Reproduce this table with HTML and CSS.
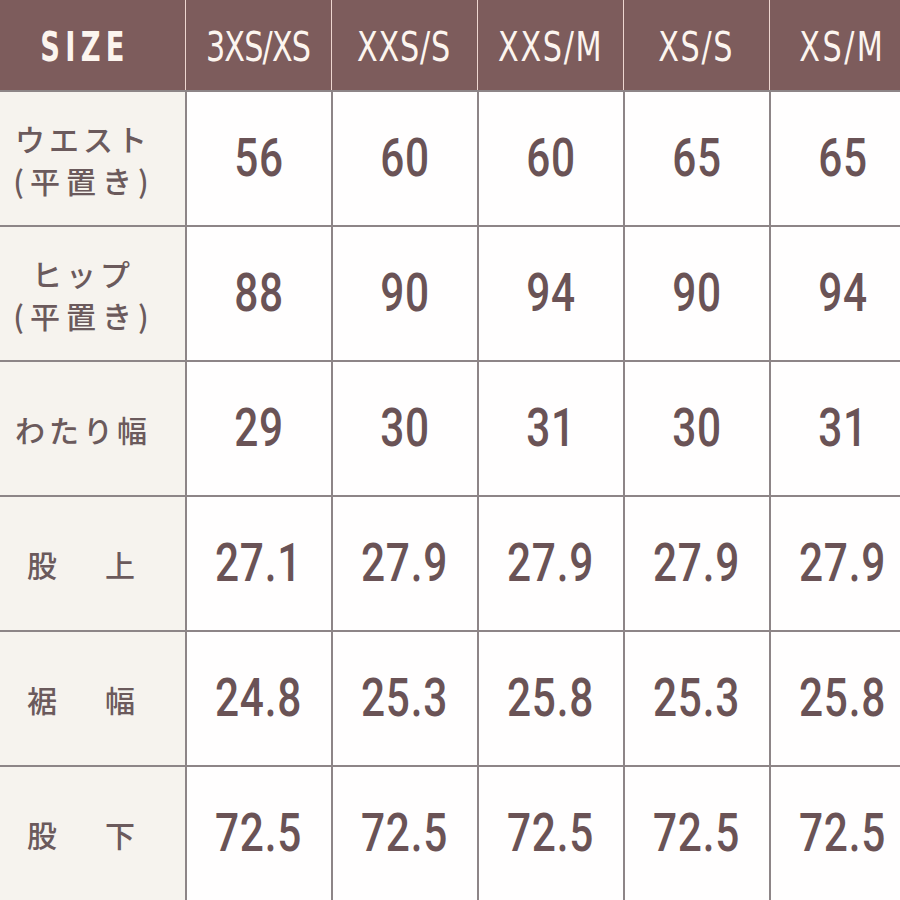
FILE: index.html
```html
<!DOCTYPE html>
<html lang="ja">
<head>
<meta charset="utf-8">
<title>Size chart</title>
<link rel="stylesheet" href="styles.css">
</head>
<body>
<div class="chart">
  <div class="hd hd-first"><span class="sq size-label">SIZE</span></div>
  <div class="hd"><span class="sq h1">3XS/XS</span></div>
  <div class="hd"><span class="sq h2">XXS/S</span></div>
  <div class="hd"><span class="sq h3">XXS/M</span></div>
  <div class="hd"><span class="sq h4">XS/S</span></div>
  <div class="hd"><span class="sq h5">XS/M</span></div>

  <div class="lbl"><div class="lbl-lines"><span>ウエスト</span><span class="paren">(平置き)</span></div></div>
  <div class="val"><span>56</span></div><div class="val"><span>60</span></div><div class="val"><span>60</span></div><div class="val"><span>65</span></div><div class="val"><span>65</span></div>

  <div class="lbl"><div class="lbl-lines"><span>ヒップ</span><span class="paren">(平置き)</span></div></div>
  <div class="val"><span>88</span></div><div class="val"><span>90</span></div><div class="val"><span>94</span></div><div class="val"><span>90</span></div><div class="val"><span>94</span></div>

  <div class="lbl"><div class="lbl-lines"><span>わたり幅</span></div></div>
  <div class="val"><span>29</span></div><div class="val"><span>30</span></div><div class="val"><span>31</span></div><div class="val"><span>30</span></div><div class="val"><span>31</span></div>

  <div class="lbl"><div class="lbl-pair"><span>股</span><span>上</span></div></div>
  <div class="val"><span>27.1</span></div><div class="val"><span>27.9</span></div><div class="val"><span>27.9</span></div><div class="val"><span>27.9</span></div><div class="val"><span>27.9</span></div>

  <div class="lbl"><div class="lbl-pair"><span>裾</span><span>幅</span></div></div>
  <div class="val"><span>24.8</span></div><div class="val"><span>25.3</span></div><div class="val"><span>25.8</span></div><div class="val"><span>25.3</span></div><div class="val"><span>25.8</span></div>

  <div class="lbl"><div class="lbl-pair"><span>股</span><span>下</span></div></div>
  <div class="val"><span>72.5</span></div><div class="val"><span>72.5</span></div><div class="val"><span>72.5</span></div><div class="val"><span>72.5</span></div><div class="val"><span>72.5</span></div>
</div>
</body>
</html>
```

FILE: styles.css
```css
html, body {
  margin: 0;
  padding: 0;
  background: #fffefe;
  overflow: hidden;
}

.chart {
  display: grid;
  grid-template-columns: 185px repeat(5, 146px);
  grid-template-rows: 90px repeat(6, 135px);
  width: 915px;
}

.hd {
  background: #7d5c5c;
  color: #fcf5ef;
  display: flex;
  align-items: center;
  justify-content: center;
  border-left: 1px solid #eed6d0;
  box-sizing: border-box;
  font-family: "DejaVu Sans Condensed", "DejaVu Sans", sans-serif;
  font-size: 40px;
  line-height: 1;
  padding-top: 4px;
}

.sq {
  display: inline-block;
  transform: scaleX(0.84);
  white-space: nowrap;
}

.hd-first {
  border-left: none;
  padding-right: 22px;
}

.size-label {
  font-weight: 700;
  letter-spacing: 7px;
  margin-right: -7px;
  transform: scaleX(0.76);
}

.h1 { letter-spacing: -1px; }
.h2 { letter-spacing: 1px; }
.h3 { letter-spacing: 2px; }
.h4 { letter-spacing: 2px; }
.h5 { letter-spacing: 3px; }

.lbl {
  background: #f6f3ee;
  border-top: 2px solid #8d8587;
  box-sizing: border-box;
  display: flex;
  align-items: center;
  justify-content: center;
  padding-right: 23px;
  color: #6b5a5c;
  font-family: "Noto Sans CJK JP", "Noto Sans", sans-serif;
  font-weight: 500;
  font-size: 30px;
}

.lbl-lines {
  display: flex;
  flex-direction: column;
  align-items: center;
  line-height: 42px;
  letter-spacing: 4px;
  margin-right: -4px;
}

.lbl-lines .paren {
  letter-spacing: 6px;
  margin-right: -2px;
}

.lbl-pair {
  display: flex;
  gap: 48px;
  line-height: 1;
}

.val {
  background: #fffefe;
  border-top: 2px solid #8d8587;
  border-left: 2px solid #8d8587;
  box-sizing: border-box;
  display: flex;
  align-items: center;
  justify-content: center;
  color: #6a5356;
  font-family: Roboto, "DejaVu Sans Condensed", sans-serif;
  font-weight: 500;
  font-size: 53px;
  line-height: 1;
  letter-spacing: 1px;
}

.val span {
  display: inline-block;
  transform: scaleX(0.8);
  white-space: nowrap;
}
```
